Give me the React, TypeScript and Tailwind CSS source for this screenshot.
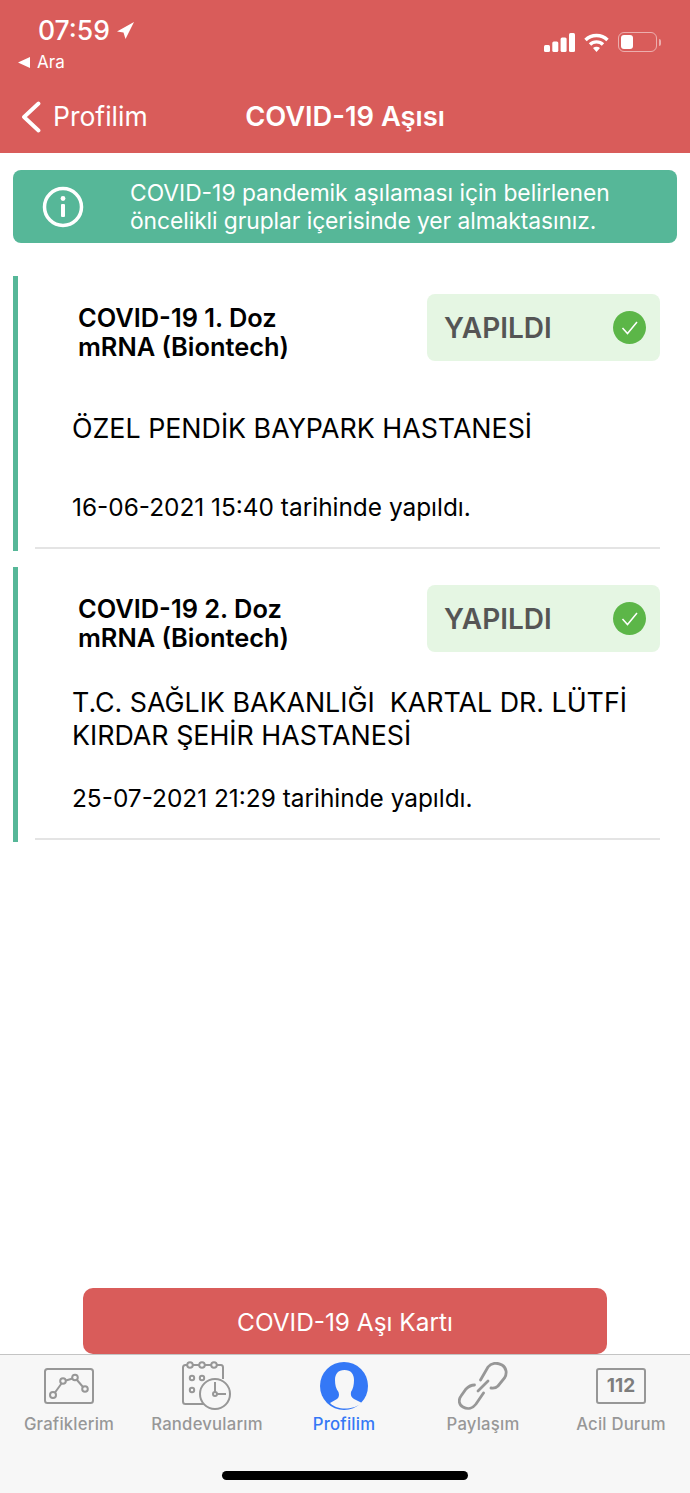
type Doz = {
  baslik: string
  hastane: string[]
  tarih: string
}

const dozlar: Doz[] = [
  { baslik: 'COVID-19 1. Doz', hastane: ['ÖZEL PENDİK BAYPARK HASTANESİ'], tarih: '16-06-2021 15:40 tarihinde yapıldı.' },
  { baslik: 'COVID-19 2. Doz', hastane: ['T.C. SAĞLIK BAKANLIĞI  KARTAL DR. LÜTFİ', 'KIRDAR ŞEHİR HASTANESİ'], tarih: '25-07-2021 21:29 tarihinde yapıldı.' },
]

function StatusBar() {
  return (
    <div className="flex justify-between h-[77px] pl-[18px] pr-[29px] pt-[13px] text-white">
      <div>
        <div className="flex items-center gap-[7px] pl-[20px] h-[34px]">
          <span className="text-[26.5px] font-medium leading-[34px]">07:59</span>
          <svg width="17" height="17" viewBox="0 0 17 17" fill="white"><path d="M17 0 L0 9.5 L6.5 10.5 L8.5 17 Z" /></svg>
        </div>
        <div className="flex items-center gap-[7px] h-[26px] mt-[2px]">
          <svg width="12" height="11" viewBox="0 0 12 11" fill="white"><path d="M12 0 V11 L0 5.5 Z" /></svg>
          <span className="text-[17px] leading-[26px]">Ara</span>
        </div>
      </div>
      <div className="flex items-center gap-[9px] h-[20px] mt-[19px]">
        <svg width="31" height="19" viewBox="0 0 31 19" fill="white">
          <rect x="0" y="12" width="6" height="7" rx="1.5" />
          <rect x="8.3" y="8.5" width="6" height="10.5" rx="1.5" />
          <rect x="16.6" y="4.5" width="6" height="14.5" rx="1.5" />
          <rect x="25" y="0" width="6" height="19" rx="1.5" />
        </svg>
        <svg width="25" height="19" viewBox="0 0 25 19" fill="none" stroke="white" strokeWidth="3.4">
          <path d="M1.5 7 C7.5 1 17.5 1 23.5 7" />
          <path d="M6 11.5 C9.5 8 15.5 8 19 11.5" />
          <path d="M12.5 19 L9 15 C11 13.3 14 13.3 16 15 Z" fill="white" stroke="none" />
        </svg>
        <div className="flex items-center gap-[2px]">
          <div className="w-[39px] h-[20px] rounded-[6px] border border-white/50 p-[2px]">
            <div className="w-[12px] h-full rounded-[3px] bg-white" />
          </div>
          <div className="w-[2px] h-[7px] rounded-r bg-white/50" />
        </div>
      </div>
    </div>
  )
}

function InfoBanner() {
  return (
    <div className="mx-[13px] mt-[17px] h-[73px] rounded-[8px] bg-[#56b798] flex items-center text-white">
      <div className="w-[117px] shrink-0 flex justify-center pr-[17px]">
        <svg width="42" height="42" viewBox="0 0 42 42" fill="none" stroke="white">
          <circle cx="21" cy="21" r="18.5" strokeWidth="3.5" />
          <circle cx="21" cy="12.5" r="2.4" fill="white" stroke="none" />
          <rect x="19" y="18" width="4" height="13" rx="1" fill="white" stroke="none" />
        </svg>
      </div>
      <div className="text-[22.8px] leading-[28px] whitespace-nowrap">
        <div>COVID-19 pandemik aşılaması için belirlenen</div>
        <div className="tracking-[-0.06px]">öncelikli gruplar içerisinde yer almaktasınız.</div>
      </div>
    </div>
  )
}

function DozKart({ doz }: { doz: Doz }) {
  return (
    <div className="flex h-[275px] mx-[13px] mb-[16px]">
      <div className="w-[5px] bg-[#56b798] shrink-0" />
      <div className="flex-1 ml-[17px] mr-[17px] h-[273px] border-b-2 border-[#e4e4e4] text-black">
        <div className="flex justify-between pt-[18px] h-[119px]">
          <div className="pl-[43px] pt-[9px] text-[25.4px] font-semibold leading-[29px] whitespace-nowrap">
            <div>{doz.baslik}</div>
            <div>mRNA (Biontech)</div>
          </div>
          <div className="w-[233px] h-[67px] rounded-[8px] bg-[#e5f6e3] flex items-center justify-between pl-[17px] pr-[14px]">
            <span className="text-[28px] font-semibold text-[#555555]">YAPILDI</span>
            <svg width="33" height="33" viewBox="0 0 33 33">
              <circle cx="16.5" cy="16.5" r="16.5" fill="#5cb648" />
              <path d="M9.5 17 L14.5 22.5 L24 11" fill="none" stroke="white" strokeWidth="1.5" />
            </svg>
          </div>
        </div>
        <div className="h-[66px] flex flex-col justify-center pl-[37px] text-[26.8px] leading-[33px] whitespace-pre">
          {doz.hastane.map(h => <div key={h}>{h}</div>)}
        </div>
        <div className="mt-[31px] pl-[37px] text-[24.4px] leading-[30px] whitespace-nowrap">{doz.tarih}</div>
      </div>
    </div>
  )
}

function Tab({ label, active, children }: { label: string; active?: boolean; children: React.ReactNode }) {
  return (
    <div className="w-[138px] flex flex-col items-center">
      <div className="h-[50px] flex items-center justify-center">{children}</div>
      <div className={`mt-[3px] text-[16.7px] font-medium leading-[20px] tracking-[0.2px] whitespace-nowrap ${active ? 'text-[#3478f6] -ml-[2px]' : 'text-[#979797]'}`}>{label}</div>
    </div>
  )
}

function TabBar() {
  return (
    <div className="relative h-[139px] bg-[#f7f7f7] border-t border-[#c4c4c4] pt-[6px]">
      <div className="flex">
        <Tab label="Grafiklerim">
          <svg width="50" height="36" viewBox="0 0 50 36" fill="none" stroke="#979797" strokeWidth="2">
            <rect x="1" y="1" width="48" height="34" rx="2.5" />
            <circle cx="9" cy="27" r="3" />
            <circle cx="19" cy="13" r="2.8" />
            <circle cx="31" cy="9.5" r="2.8" />
            <circle cx="41" cy="21" r="2.8" />
            <path d="M11 24.5 L17.5 15.5 M22 12.5 L28.5 10.5 M33 12 L39 19" />
          </svg>
        </Tab>
        <Tab label="Randevularım">
          <svg width="50" height="50" viewBox="0 0 50 50" fill="none" stroke="#979797" strokeWidth="2">
            <path d="M26 43 H3.5 C2 43 1 42 1 40.5 V6.5 C1 5 2 4 3.5 4 H39 C40.5 4 41 5 41 6.5 V18" />
            <circle cx="8" cy="4" r="2.8" fill="#f7f7f7" />
            <circle cx="20" cy="4" r="2.8" fill="#f7f7f7" />
            <circle cx="32" cy="4" r="2.8" fill="#f7f7f7" />
            <circle cx="10" cy="17" r="2.2" />
            <circle cx="20" cy="17" r="2.2" />
            <circle cx="10" cy="29" r="2.2" />
            <circle cx="33" cy="33" r="15" fill="#f7f7f7" />
            <circle cx="33" cy="33" r="2" />
            <path d="M33 21 V31 M35 33 H44" />
          </svg>
        </Tab>
        <Tab label="Profilim" active>
          <svg width="48" height="48" viewBox="0 0 48 48" className="-ml-[2px]">
            <circle cx="24" cy="24" r="24" fill="#3478f6" />
            <path d="M24.5 8 C31 8 34 12 34 18 C34 23 33 27 31 30 C30.5 33 31 35 34 37 L42 41 C37 45 31 46.5 25 46.5 C19 46.5 14 45 10 41 L17 37 C19 35.5 19.5 33 18.5 30 C16 27 15 23 15 18 C15 12 18 8 24.5 8 Z" fill="#f7f7f7" />
          </svg>
        </Tab>
        <Tab label="Paylaşım">
          <svg width="50" height="48" viewBox="0 0 50 48" fill="none" stroke="#979797" strokeWidth="2.8" strokeLinecap="round">
            <path d="M22.5 18 L30 5 C33 1 39 0 44 3 C49 6 49 12 46.5 16 L40 24 C38 26 36 26.5 33 26" />
            <path d="M16.5 23 C13 23 10 25 8 27 L3 34 C0 38 1 43 5 45 C10 48 15 46 18 42 L25.5 31" />
            <path d="M20 29 L30 19" />
          </svg>
        </Tab>
        <Tab label="Acil Durum">
          <div className="w-[50px] h-[36px] rounded-[3px] border-2 border-[#979797] flex items-center justify-center text-[19px] font-bold text-[#7d7d7d]">112</div>
        </Tab>
      </div>
      <div className="absolute left-[222px] top-[116px] w-[246px] h-[9px] rounded-full bg-black" />
    </div>
  )
}

export default function App() {
  return (
    <div className="w-[690px] h-[1493px] flex flex-col bg-white overflow-hidden font-['Inter',sans-serif]">
      <div className="h-[153px] bg-[#d95c5a] shrink-0">
        <StatusBar />
        <div className="relative h-[76px] text-white">
          <div className="flex items-center h-[80px] pl-[21px]">
            <svg width="20" height="32" viewBox="0 0 20 32" fill="none" stroke="white" strokeWidth="3.8" strokeLinecap="round" strokeLinejoin="round" className="shrink-0">
              <path d="M17.5 2.5 L3 16 L17.5 29.5" />
            </svg>
            <span className="text-[26.5px] ml-[12px]">Profilim</span>
          </div>
          <div className="absolute inset-x-0 top-0 h-[80px] flex items-center justify-center text-[27.3px] font-semibold">COVID-19 Aşısı</div>
        </div>
      </div>
      <InfoBanner />
      <div className="mt-[33px] flex-1">
        {dozlar.map(d => <DozKart key={d.baslik} doz={d} />)}
      </div>
      <div className="mx-[83px] h-[66px] rounded-[10px] bg-[#d95c5a] flex items-center justify-center pt-[2px] text-white text-[24.4px] shrink-0">
        COVID-19 Aşı Kartı
      </div>
      <TabBar />
    </div>
  )
}
